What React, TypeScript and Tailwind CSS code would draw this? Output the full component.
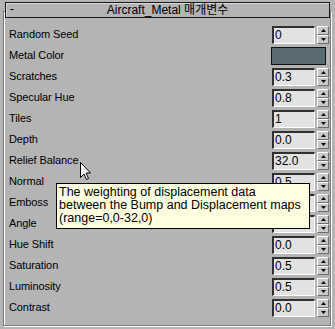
import React from 'react';

const rows: { label: string; value?: string; color?: string }[] = [
    { label: 'Random Seed', value: '0' },
    { label: 'Metal Color', color: '#5a6b71' },
    { label: 'Scratches', value: '0.3' },
    { label: 'Specular Hue', value: '0.8' },
    { label: 'Tiles', value: '1' },
    { label: 'Depth', value: '0.0' },
    { label: 'Relief Balance', value: '32.0' },
    { label: 'Normal', value: '0.5' },
    { label: 'Emboss', value: '0.5' },
    { label: 'Angle', value: '0.0' },
    { label: 'Hue Shift', value: '0.0' },
    { label: 'Saturation', value: '0.5' },
    { label: 'Luminosity', value: '0.5' },
    { label: 'Contrast', value: '0.0' },
];

const Spinner: React.FC = () => (
    <div className="flex flex-col w-[12px] h-[18px] ml-[2px]">
        <div className="flex-1 flex items-center justify-center bg-[#c8c8c8] border-t border-l border-white border-r border-b border-r-[#6e6e6e] border-b-[#6e6e6e]">
            <svg width="5" height="3" viewBox="0 0 5 3"><path d="M2.5 0 L5 3 L0 3 Z" fill="#000" /></svg>
        </div>
        <div className="flex-1 flex items-center justify-center bg-[#c8c8c8] border-t border-l border-white border-r border-b border-r-[#6e6e6e] border-b-[#6e6e6e]">
            <svg width="5" height="3" viewBox="0 0 5 3"><path d="M0 0 L5 0 L2.5 3 Z" fill="#000" /></svg>
        </div>
    </div>
);

const App: React.FC = () => {
    return (
        <div
            className="w-[335px] h-[329px] bg-[#b4b4b4] relative overflow-hidden pt-[11px] pl-[3px]"
            style={{ fontFamily: '"Liberation Sans", Arial, sans-serif' }}
        >
            {/* group frame */}
            <div className="w-[328px] h-[315px] border border-[#7a7a7a] shadow-[inset_1px_1px_0_#fff,1px_1px_0_#fff]">
                {/* rollout header */}
                <div className="-mt-[10px] ml-[1px] w-[325px] h-[16px] bg-[#b4b4b4] border border-[#1a1a1a] shadow-[inset_1px_1px_0_#d8d8d8] flex items-center relative">
                    <span className="absolute left-[4px] top-[0px] text-[12px] leading-[13px] text-black">-</span>
                    <span
                        className="w-full text-center text-[12px] leading-[14px] text-black"
                        style={{ fontFamily: '"Liberation Sans", "Noto Sans CJK KR", sans-serif' }}
                    >
                        Aircraft_Metal 매개변수
                    </span>
                </div>

                <div className="mt-[6px] flex flex-col">
                    {rows.map((r) => (
                        <div key={r.label} className="h-[21px] flex items-center pl-[5px]">
                            <span className="w-[263px] text-[11px] tracking-[-0.1px] text-black leading-[13px]">
                                {r.label}
                            </span>
                            {r.color ? (
                                <div className="-ml-[1px] w-[55px] h-[18px] border border-[#101010]" style={{ background: r.color }} />
                            ) : (
                                <>
                                    <div className="w-[43px] h-[18px] bg-[#e2e2e2] border-t-2 border-l-2 border-t-[#303030] border-l-[#303030] border-r border-b border-r-white border-b-white flex items-center pl-[1px]">
                                        <span className="text-[12px] leading-[14px] text-black">{r.value}</span>
                                    </div>
                                    <Spinner />
                                </>
                            )}
                        </div>
                    ))}
                </div>
            </div>

            {/* tooltip */}
            <div
                className="absolute left-[56px] top-[183px] w-[254px] h-[46px] bg-[#ffffe1] border border-black px-[2px] pt-[2px] text-[12.5px] leading-[13px] text-black whitespace-nowrap"
                style={{ fontFamily: '"Liberation Sans", "Noto Sans CJK KR", sans-serif' }}
            >
                <div>The weighting of displacement data</div>
                <div>between the Bump and Displacement maps</div>
                <div>(range=0,0-32,0)</div>
            </div>

            {/* mouse cursor */}
            <svg className="absolute left-[80px] top-[162px]" width="12" height="19" viewBox="0 0 12 19">
                <path d="M0.5 0.5 L0.5 15.5 L4 12 L6.5 17.5 L8.5 16.5 L6 11 L10.5 11 Z" fill="#fff" stroke="#000" strokeWidth="1" />
            </svg>
        </div>
    );
};

export default App;
